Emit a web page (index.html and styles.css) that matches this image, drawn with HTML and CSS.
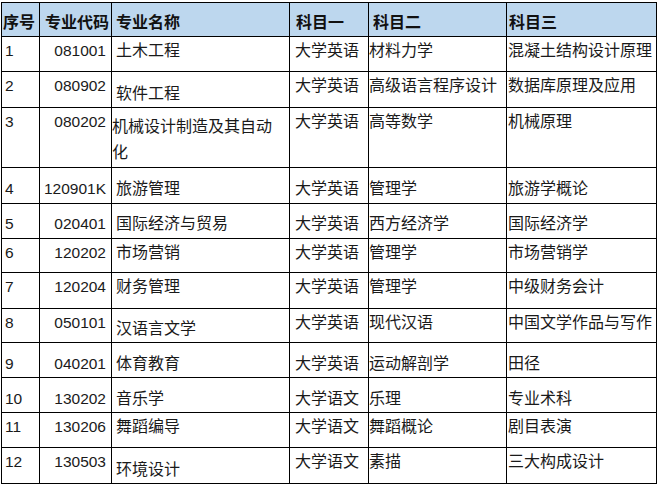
FILE: index.html
```html
<!DOCTYPE html>
<html lang="zh">
<head>
<meta charset="utf-8">
<link rel="stylesheet" href="styles.css">
</head>
<body>
<table class="grid">
  <colgroup>
    <col class="c-no"><col class="c-code"><col class="c-name"><col class="c-s1"><col class="c-s2"><col class="c-s3">
  </colgroup>
  <thead>
    <tr class="head">
      <th class="no">序号</th><th class="code">专业代码</th><th class="name">专业名称</th><th class="s1">科目一</th><th class="s2">科目二</th><th class="s3">科目三</th>
    </tr>
  </thead>
  <tbody>
    <tr class="r35"><td class="no num">1</td><td class="code num">081001</td><td class="name">土木工程</td><td class="s1">大学英语</td><td class="s2">材料力学</td><td class="s3">混凝土结构设计原理</td></tr>
    <tr class="r35"><td class="no num">2</td><td class="code num">080902</td><td class="name low8">软件工程</td><td class="s1">大学英语</td><td class="s2">高级语言程序设计</td><td class="s3">数据库原理及应用</td></tr>
    <tr class="r60"><td class="no num">3</td><td class="code num">080202</td><td class="name flush">机械设计制造及其自动化</td><td class="s1">大学英语</td><td class="s2">高等数学</td><td class="s3">机械原理</td></tr>
    <tr class="r36 mid"><td class="no num">4</td><td class="code num">120901K</td><td class="name">旅游管理</td><td class="s1">大学英语</td><td class="s2">管理学</td><td class="s3">旅游学概论</td></tr>
    <tr class="r35 mid5"><td class="no num">5</td><td class="code num">020401</td><td class="name">国际经济与贸易</td><td class="s1">大学英语</td><td class="s2">西方经济学</td><td class="s3">国际经济学</td></tr>
    <tr class="r34 up"><td class="no num">6</td><td class="code num">120202</td><td class="name">市场营销</td><td class="s1">大学英语</td><td class="s2">管理学</td><td class="s3">市场营销学</td></tr>
    <tr class="r36"><td class="no num">7</td><td class="code num">120204</td><td class="name">财务管理</td><td class="s1">大学英语</td><td class="s2">管理学</td><td class="s3">中级财务会计</td></tr>
    <tr class="r34 up"><td class="no num">8</td><td class="code num">050101</td><td class="name low6">汉语言文学</td><td class="s1">大学英语</td><td class="s2">现代汉语</td><td class="s3">中国文学作品与写作</td></tr>
    <tr class="r35 mid"><td class="no num">9</td><td class="code num">040201</td><td class="name">体育教育</td><td class="s1">大学英语</td><td class="s2">运动解剖学</td><td class="s3">田径</td></tr>
    <tr class="r35 mid"><td class="no num">10</td><td class="code num">130202</td><td class="name">音乐学</td><td class="s1">大学语文</td><td class="s2">乐理</td><td class="s3">专业术科</td></tr>
    <tr class="r35"><td class="no num">11</td><td class="code num">130206</td><td class="name">舞蹈编导</td><td class="s1">大学语文</td><td class="s2">舞蹈概论</td><td class="s3">剧目表演</td></tr>
    <tr class="r35 up"><td class="no num">12</td><td class="code num">130503</td><td class="name low8">环境设计</td><td class="s1">大学语文</td><td class="s2">素描</td><td class="s3">三大构成设计</td></tr>
  </tbody>
</table>
</body>
</html>
```
FILE: styles.css
```css
html, body {
  margin: 0;
  padding: 0;
  background: #ffffff;
}

body {
  font-family: "Liberation Sans", "Noto Sans CJK SC", sans-serif;
  color: #1a1a1a;
}

.grid {
  margin: 2px 0 0 1px;
  border-collapse: collapse;
  table-layout: fixed;
  width: 655px;
  font-size: 16px;
  line-height: 27px;
}

.c-no { width: 38px; }
.c-code { width: 72px; }
.c-name { width: 178px; }
.c-s1 { width: 79px; }
.c-s2 { width: 138px; }
.c-s3 { width: 150px; }

.grid th,
.grid td {
  border: 1px solid #000;
  padding: 0;
  vertical-align: top;
  text-align: left;
  white-space: normal;
  overflow: hidden;
  box-sizing: border-box;
}

.grid th {
  background: #bdd7ee;
  font-weight: bold;
  height: 33px;
  padding-top: 6px;
  color: #111;
}

.r34 td { height: 34px; }
.r35 td { height: 35px; }
.r36 td { height: 36px; }
.r60 td { height: 60px; }

.num { font-size: 15.5px; }

th.no { padding-left: 1px; }
th.code { padding-left: 5px; }
th.name { padding-left: 4px; }
th.s1 { padding-left: 6px; }
th.s2 { padding-left: 4px; }
th.s3 { padding-left: 2px; }

td.no { padding-left: 3px; }
td.code { text-align: right; padding-right: 5px; }
td.name { padding-left: 4px; }
td.s1 { padding-left: 5px; }
td.s2 { padding-left: 0; }
td.s3 { padding-left: 1px; }

td.flush {
  padding-left: 0;
  padding-right: 12px;
  padding-top: 6px;
  line-height: 26px;
}

.mid td { padding-top: 7px; }
.mid5 td { padding-top: 6px; }
.up td { padding-top: 0; }

td.low6 { padding-top: 6px; }
td.low8 { padding-top: 8px; }
.grid .up td.low6 { padding-top: 6px; }
.grid .up td.low8 { padding-top: 8px; }
```
